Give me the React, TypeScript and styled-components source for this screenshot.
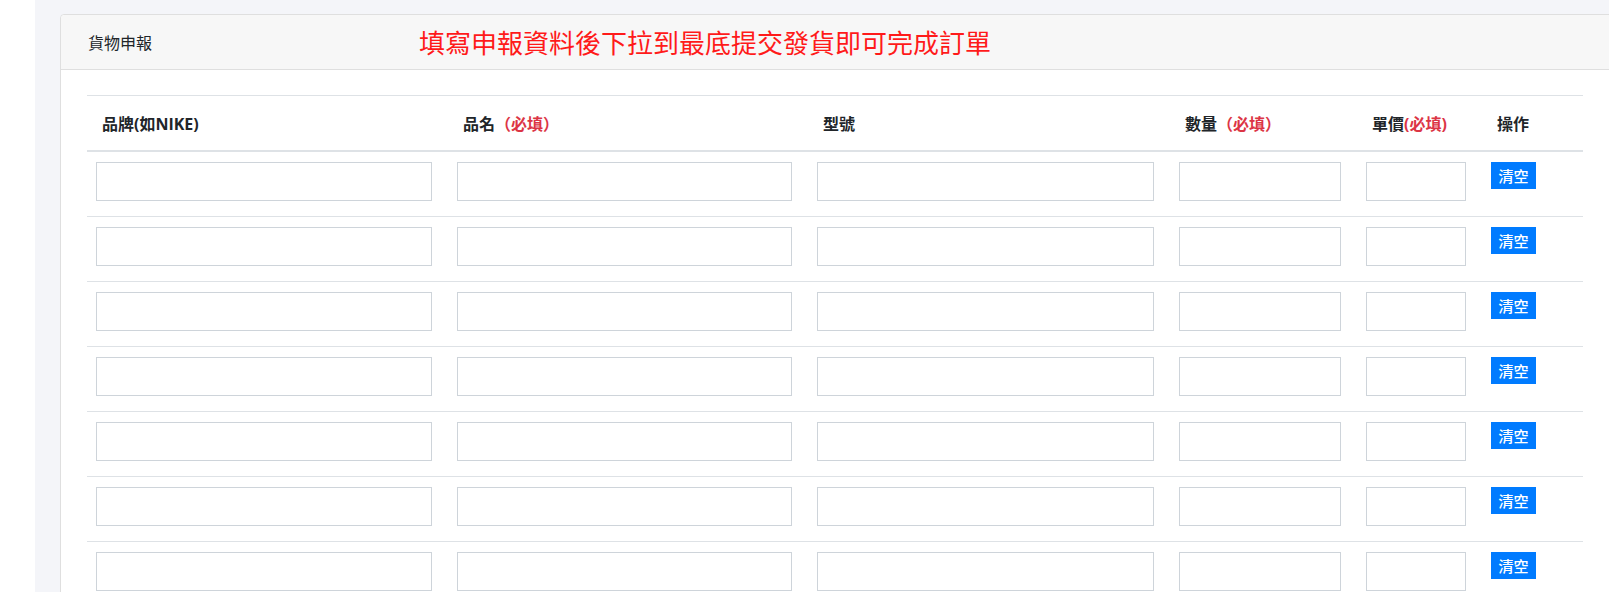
import React from 'react';
import styled, { createGlobalStyle } from 'styled-components';

const GlobalStyle = createGlobalStyle`
  html, body {
    margin: 0;
    padding: 0;
    background: #fff;
  }
  body {
    font-family: "Open Sans", "Noto Sans CJK TC", sans-serif;
    color: #212529;
  }
`;

const Page = styled.div`
  display: flex;
  width: 1609px;
  height: 592px;
  overflow: hidden;
`;

const SideStrip = styled.div`
  width: 35px;
  flex-shrink: 0;
  background: #fff;
`;

const Main = styled.div`
  flex: 1;
  background: #f4f5f9;
  padding: 14px 0 0 25px;
  overflow: hidden;
`;

const Card = styled.div`
  width: 1580px;
  background: #fff;
  border: 1px solid #dfdfdf;
  border-radius: 4px;
`;

const CardHeader = styled.div`
  display: flex;
  align-items: center;
  height: 54px;
  padding-left: 27px;
  background: #f7f7f7;
  border-bottom: 1px solid #dfdfdf;
  border-radius: 4px 4px 0 0;
`;

const CardTitle = styled.span`
  font-size: 16px;
  color: #212529;
`;

const Notice = styled.span`
  margin-left: 267px;
  font-family: "Noto Sans CJK TC", sans-serif;
  font-size: 26px;
  color: #ff1a1a;
  line-height: 1;
`;

const CardBody = styled.div`
  padding: 25px 0 0 26px;
`;

const Table = styled.div`
  width: 1496px;
`;

const columns = '336px 335px 337px 162px 100px auto';

const HeadRow = styled.div`
  display: grid;
  grid-template-columns: ${columns};
  column-gap: 25px;
  align-items: center;
  height: 54px;
  padding-left: 15px;
  border-top: 1px solid #dee2e6;
  border-bottom: 2px solid #dee2e6;
`;

const HeadCell = styled.div`
  font-size: 16px;
  font-weight: 700;
  color: #212529;
  white-space: nowrap;
`;

const Required = styled.span`
  color: #dc3545;
`;

const BodyRow = styled.div`
  display: grid;
  grid-template-columns: ${columns};
  column-gap: 25px;
  align-items: start;
  padding: 10px 0 15px 9px;
  border-bottom: 1px solid #dee2e6;
`;

const Field = styled.input`
  box-sizing: border-box;
  width: 100%;
  height: 39px;
  margin: 0;
  padding: 0 10px;
  border: 1px solid #ced4da;
  border-radius: 0;
  background: #fff;
  font-size: 15px;
  outline: none;
`;

const ClearButton = styled.button`
  width: 45px;
  height: 27px;
  padding: 0;
  border: none;
  border-radius: 0;
  background: #007bff;
  color: #fff;
  font-family: "Noto Sans CJK TC", sans-serif;
  font-size: 15px;
  font-weight: 500;
  line-height: 27px;
  cursor: pointer;
`;

const rows = Array.from({ length: 8 }, (_, i) => i);

export default function App() {
  return (
    <>
      <GlobalStyle />
      <Page>
        <SideStrip />
        <Main>
          <Card>
            <CardHeader>
              <CardTitle>貨物申報</CardTitle>
              <Notice>填寫申報資料後下拉到最底提交發貨即可完成訂單</Notice>
            </CardHeader>
            <CardBody>
              <Table>
                <HeadRow>
                  <HeadCell>品牌(如NIKE)</HeadCell>
                  <HeadCell>品名<Required>（必填）</Required></HeadCell>
                  <HeadCell>型號</HeadCell>
                  <HeadCell>數量<Required>（必填）</Required></HeadCell>
                  <HeadCell>單價<Required>(必填)</Required></HeadCell>
                  <HeadCell>操作</HeadCell>
                </HeadRow>
                {rows.map((r) => (
                  <BodyRow key={r}>
                    <Field type="text" />
                    <Field type="text" />
                    <Field type="text" />
                    <Field type="text" />
                    <Field type="text" />
                    <div>
                      <ClearButton type="button">清空</ClearButton>
                    </div>
                  </BodyRow>
                ))}
              </Table>
            </CardBody>
          </Card>
        </Main>
      </Page>
    </>
  );
}
